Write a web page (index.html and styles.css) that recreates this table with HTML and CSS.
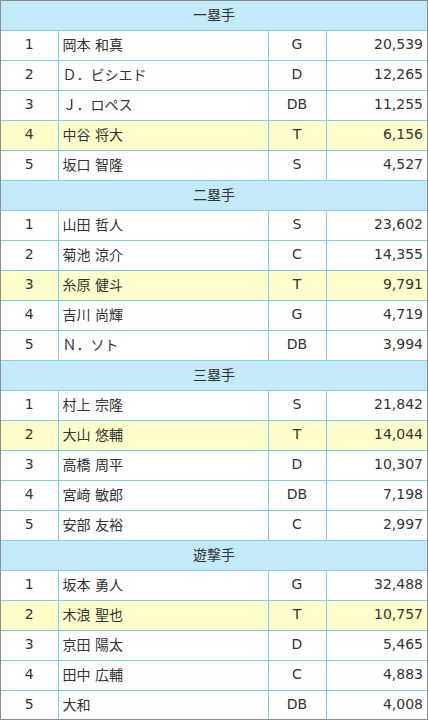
FILE: index.html
```html
<!DOCTYPE html>
<html>
<head>
    <title>守備位置別 得票数</title>
    <link rel="stylesheet" href="styles.css">
</head>
<body>
    <div class="frame">
        <table class="votes">
            <colgroup>
                <col class="col-rank">
                <col class="col-name">
                <col class="col-team">
                <col class="col-votes">
            </colgroup>

            <!-- 一塁手 -->
            <tr class="section"><th colspan="4">一塁手</th></tr>
            <tr><td class="rank">1</td><td>岡本 和真</td><td class="team">G</td><td class="num">20,539</td></tr>
            <tr><td class="rank">2</td><td>Ｄ．ビシエド</td><td class="team">D</td><td class="num">12,265</td></tr>
            <tr><td class="rank">3</td><td>Ｊ．ロペス</td><td class="team">DB</td><td class="num">11,255</td></tr>
            <tr class="mark"><td class="rank">4</td><td>中谷 将大</td><td class="team">T</td><td class="num">6,156</td></tr>
            <tr><td class="rank">5</td><td>坂口 智隆</td><td class="team">S</td><td class="num">4,527</td></tr>

            <!-- 二塁手 -->
            <tr class="section"><th colspan="4">二塁手</th></tr>
            <tr><td class="rank">1</td><td>山田 哲人</td><td class="team">S</td><td class="num">23,602</td></tr>
            <tr><td class="rank">2</td><td>菊池 涼介</td><td class="team">C</td><td class="num">14,355</td></tr>
            <tr class="mark"><td class="rank">3</td><td>糸原 健斗</td><td class="team">T</td><td class="num">9,791</td></tr>
            <tr><td class="rank">4</td><td>吉川 尚輝</td><td class="team">G</td><td class="num">4,719</td></tr>
            <tr><td class="rank">5</td><td>Ｎ．ソト</td><td class="team">DB</td><td class="num">3,994</td></tr>

            <!-- 三塁手 -->
            <tr class="section"><th colspan="4">三塁手</th></tr>
            <tr><td class="rank">1</td><td>村上 宗隆</td><td class="team">S</td><td class="num">21,842</td></tr>
            <tr class="mark"><td class="rank">2</td><td>大山 悠輔</td><td class="team">T</td><td class="num">14,044</td></tr>
            <tr><td class="rank">3</td><td>高橋 周平</td><td class="team">D</td><td class="num">10,307</td></tr>
            <tr><td class="rank">4</td><td>宮﨑 敏郎</td><td class="team">DB</td><td class="num">7,198</td></tr>
            <tr><td class="rank">5</td><td>安部 友裕</td><td class="team">C</td><td class="num">2,997</td></tr>

            <!-- 遊撃手 -->
            <tr class="section"><th colspan="4">遊撃手</th></tr>
            <tr><td class="rank">1</td><td>坂本 勇人</td><td class="team">G</td><td class="num">32,488</td></tr>
            <tr class="mark"><td class="rank">2</td><td>木浪 聖也</td><td class="team">T</td><td class="num">10,757</td></tr>
            <tr><td class="rank">3</td><td>京田 陽太</td><td class="team">D</td><td class="num">5,465</td></tr>
            <tr><td class="rank">4</td><td>田中 広輔</td><td class="team">C</td><td class="num">4,883</td></tr>
            <tr><td class="rank">5</td><td>大和</td><td class="team">DB</td><td class="num">4,008</td></tr>
        </table>
    </div>
</body>
</html>
```

FILE: styles.css
```css
body {
    margin: 0;
    font-family: "DejaVu Sans", "Noto Sans CJK JP", sans-serif;
    font-size: 14px;
    color: #333;
}

.frame {
    box-sizing: border-box;
    height: 720px;
    border: 1px solid #8c8c8c;
    overflow: hidden;
}

/* Table */
.votes {
    width: 100%;
    border-collapse: collapse;
    border-style: hidden;
    table-layout: fixed;
}

.col-rank { width: 57px; }
.col-name { width: 210px; }
.col-team { width: 58px; }

.votes th,
.votes td {
    height: 26px;
    padding: 0 4px 3px;
    border: 1px solid #7fd0f2;
    font-weight: normal;
    white-space: nowrap;
}

.section th {
    background-color: #c4eafa;
    text-align: center;
}

.rank,
.team {
    text-align: center;
}

.num {
    text-align: right;
}

/* Highlighted rows */
.mark td {
    background-color: #ffffcc;
    border-top-color: #74d8d2;
    border-bottom-color: #74d8d2;
}
```
